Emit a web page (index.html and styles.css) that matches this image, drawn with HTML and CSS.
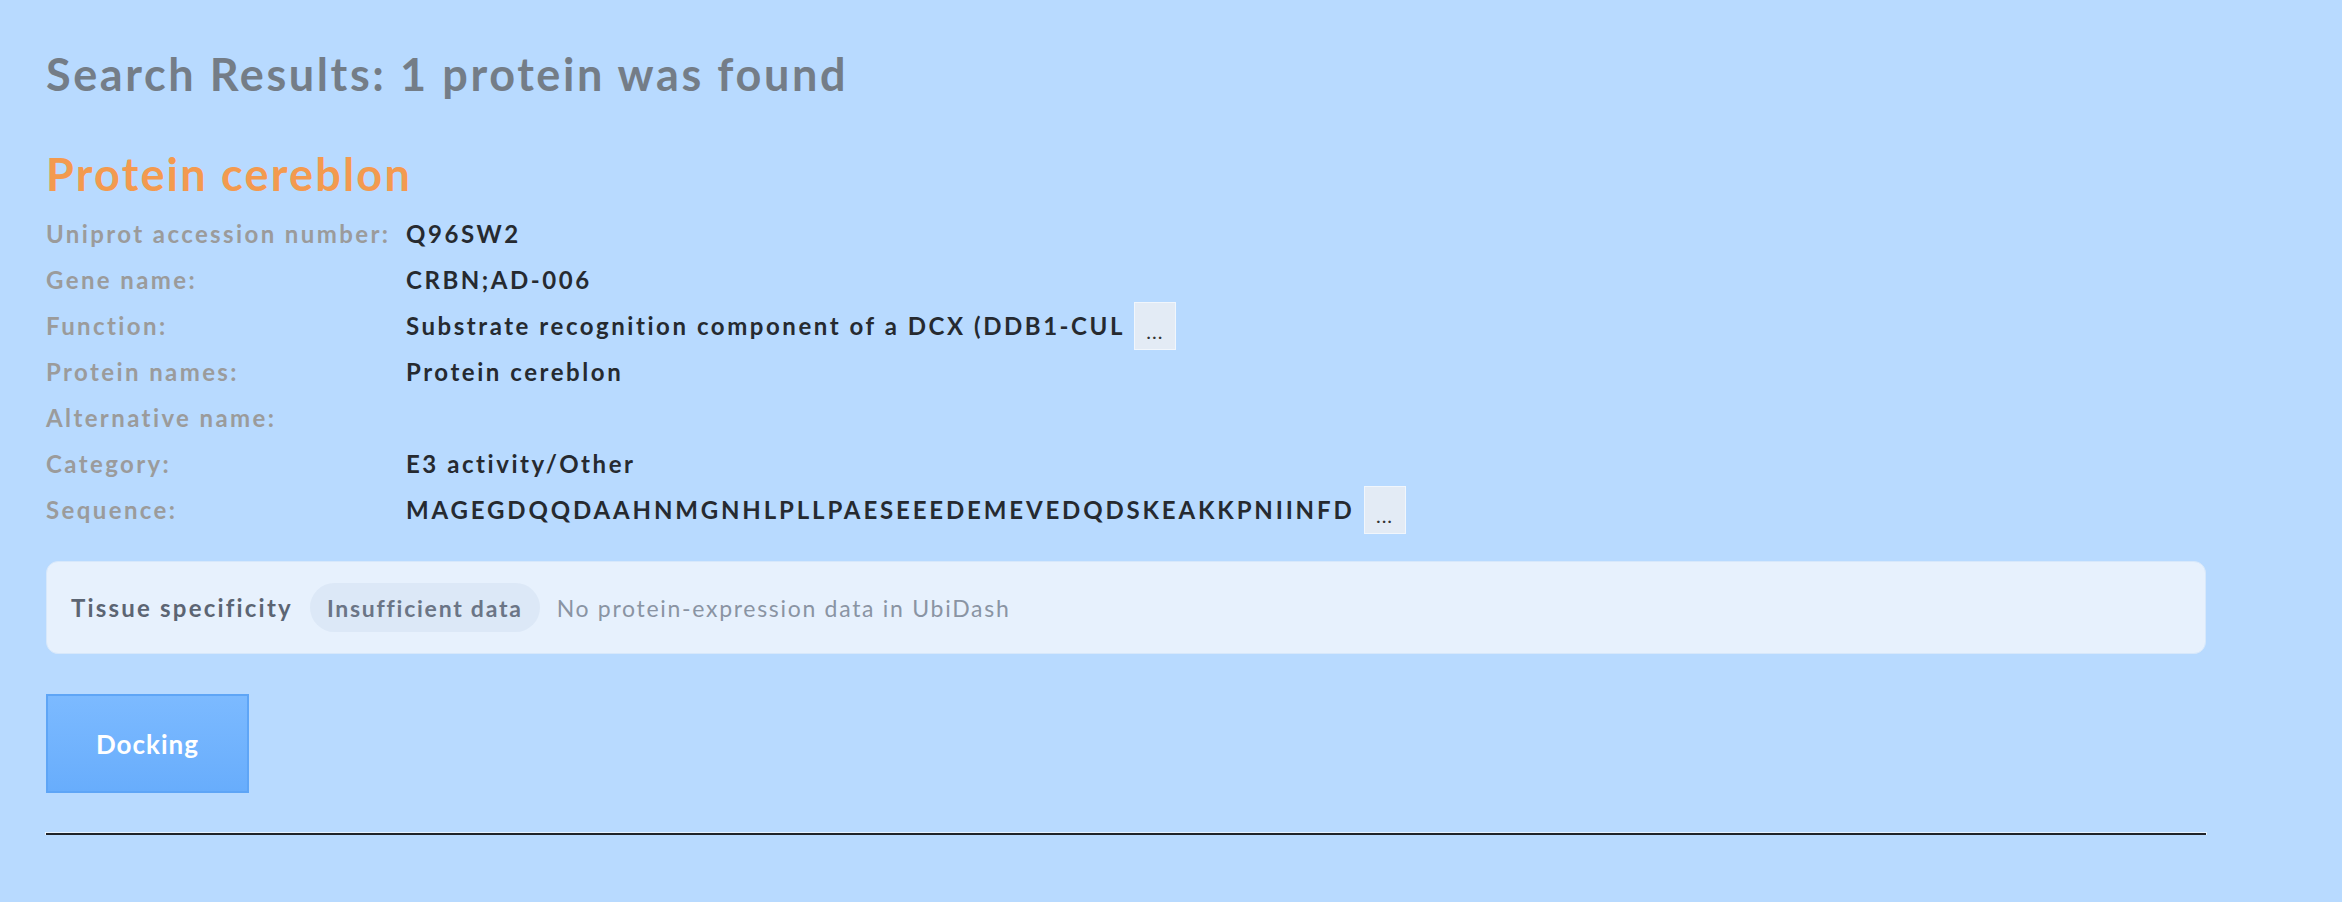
FILE: index.html
```html
<!DOCTYPE html>
<html lang="en">
<head>
<meta charset="utf-8">
<title>Search Results</title>
<link rel="stylesheet" href="styles.css">
</head>
<body>
<main class="page">
  <h2 class="results-title">Search Results: 1 protein was found</h2>
  <section class="protein">
    <h3 class="protein-name">Protein cereblon</h3>
    <dl class="info-grid">
      <dt>Uniprot accession number:</dt>
      <dd>Q96SW2</dd>
      <dt>Gene name:</dt>
      <dd>CRBN;AD-006</dd>
      <dt>Function:</dt>
      <dd>Substrate recognition component of a DCX (DDB1-CUL <button class="more-btn">...</button></dd>
      <dt>Protein names:</dt>
      <dd>Protein cereblon</dd>
      <dt>Alternative name:</dt>
      <dd></dd>
      <dt>Category:</dt>
      <dd>E3 activity/Other</dd>
      <dt>Sequence:</dt>
      <dd class="seq">MAGEGDQQDAAHNMGNHLPLLPAESEEEDEMEVEDQDSKEAKKPNIINFD <button class="more-btn">...</button></dd>
    </dl>
    <div class="tissue">
      <span class="tissue-label">Tissue specificity</span>
      <span class="tissue-pill">Insufficient data</span>
      <span class="tissue-note">No protein-expression data in UbiDash</span>
    </div>
    <button class="dock-btn">Docking</button>
    <hr class="divider">
  </section>
</main>
</body>
</html>
```

FILE: styles.css
```css
html, body {
  margin: 0;
  padding: 0;
  background: #b8daff;
}
body {
  font-family: "Lato", "Noto Sans", sans-serif;
  color: #222;
}
.page {
  width: 2160px;
  padding: 0 0 0 46px;
}
.results-title {
  margin: 0;
  padding-top: 47px;
  font-size: 45px;
  line-height: 54px;
  font-weight: 700;
  letter-spacing: 2.6px;
  color: #747d87;
}
.protein-name {
  margin: 0;
  padding-top: 46px;
  font-size: 45px;
  line-height: 54px;
  font-weight: 700;
  letter-spacing: 2.2px;
  color: #f39a4f;
}
.info-grid {
  display: grid;
  grid-template-columns: 360px 1fr;
  grid-auto-rows: 46px;
  margin: 10px 0 0 0;
  font-size: 24px;
  line-height: 46px;
}
.info-grid dt {
  font-weight: 700;
  color: #9b9b9b;
  letter-spacing: 2.4px;
  white-space: nowrap;
}
.info-grid dd {
  margin: 0;
  font-weight: 700;
  color: #262a30;
  letter-spacing: 2.55px;
  display: flex;
  align-items: center;
  gap: 9px;
  white-space: nowrap;
}
.info-grid dd.seq {
  letter-spacing: 2.85px;
}
.more-btn {
  height: 48px;
  width: 42px;
  margin: -1px 0;
  padding: 0 0 8px 0;
  border: 1px solid #f1f6fc;
  background: #e3ebf5;
  color: #333;
  font-family: inherit;
  font-size: 20px;
  letter-spacing: 1px;
  line-height: 1;
  display: flex;
  align-items: flex-end;
  justify-content: center;
}
.tissue {
  margin-top: 28px;
  height: 93px;
  box-sizing: border-box;
  display: flex;
  align-items: center;
  gap: 17px;
  padding: 0 24px;
  background: #e7f1fd;
  border: 1px solid #d7e8fb;
  border-radius: 12px;
}
.tissue-label {
  font-size: 24px;
  font-weight: 700;
  letter-spacing: 2.2px;
  color: #5c6573;
}
.tissue-pill {
  height: 49px;
  padding: 0 17px;
  border-radius: 25px;
  background: #dce8f7;
  display: flex;
  align-items: center;
  font-size: 23px;
  font-weight: 700;
  letter-spacing: 1.75px;
  color: #6b7586;
}
.tissue-note {
  font-size: 23px;
  letter-spacing: 1.7px;
  color: #8a94a3;
}
.dock-btn {
  display: block;
  margin-top: 40px;
  width: 203px;
  height: 99px;
  border: 2px solid #5ea5f6;
  background: linear-gradient(#7cbaff, #68adfc);
  color: #fff;
  font-family: inherit;
  font-size: 26px;
  font-weight: 700;
  letter-spacing: 1px;
}
.divider {
  margin: 40px 0 0 0;
  width: 2160px;
  height: 0;
  border: 0;
  border-top: 2px solid #1f2329;
  box-shadow: 0 0 0 1px #e6f2ff;
}
```
